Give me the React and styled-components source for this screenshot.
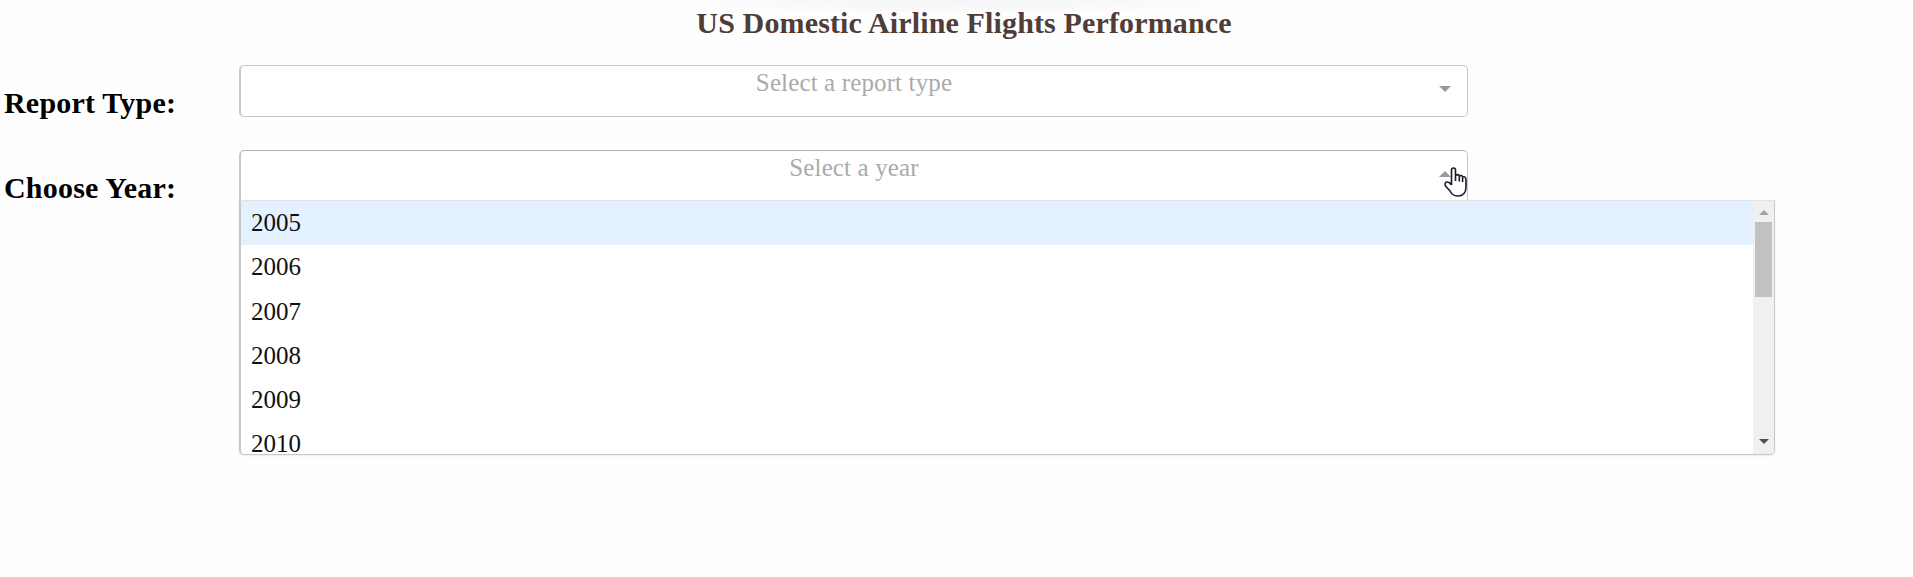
import React from "react";
import styled, { createGlobalStyle } from "styled-components";

const GlobalStyle = createGlobalStyle`
  body { margin: 0; background: #fefefe; font-family: "Liberation Serif", "Times New Roman", serif; overflow: hidden; }
  * { box-sizing: border-box; }
`;
const Page = styled.main`
  height: 577px;
  position: relative;
`;
const TopShade = styled.div`
  position: absolute;
  top: 0;
  left: 660px;
  width: 600px;
  height: 15px;
  background: radial-gradient(ellipse 50% 100% at 50% 0, #f5f5f5 0%, #f8f8f8 50%, #fefefe 100%);
`;
const Title = styled.h1`
  position: relative;
  margin: 0;
  padding: 6px 0 25px 15px;
  text-align: center;
  font-size: 30px;
  line-height: 34px;
  letter-spacing: 0.14px;
  color: #503d36;
`;
const Form = styled.div`
  display: grid;
  row-gap: 33px;
`;
const Row = styled.div`
  display: grid;
  grid-template-columns: 235px 1229px;
  padding-left: 4px;
  height: 52px;
`;
const Label = styled.h2`
  margin: 0;
  padding-top: 21px;
  font-size: 30px;
  line-height: 34px;
  letter-spacing: 0.2px;
  color: #000;
`;
const Field = styled.div`
  position: relative;
`;
const Control = styled.div`
  display: flex;
  justify-content: center;
  position: relative;
  height: ${(p) => (p.$open ? 50 : 52)}px;
  padding-top: 3px;
  background: #fff;
  border: 1px solid #c8c8c8;
  border-top-color: ${(p) => (p.$open ? "#b3b3b3" : "#c8c8c8")};
  border-left-width: 2px;
  border-bottom-width: ${(p) => (p.$open ? 0 : 1)}px;
  border-radius: ${(p) => (p.$open ? "5px 5px 0 0" : "5px")};
`;
const Placeholder = styled.span`
  font-size: 25px;
  line-height: 28px;
  letter-spacing: 0.13px;
  color: #aaa;
`;
const Caret = styled.svg`
  position: absolute;
  right: 16px;
  top: 20px;
  width: 12px;
  height: 6px;
  fill: #999;
`;
const Menu = styled.div`
  position: absolute;
  top: 50px;
  left: 0;
  width: 1536px;
  height: 255px;
  display: flex;
  overflow: hidden;
  background: #fff;
  border: 1px solid #c8c8c8;
  border-left-width: 2px;
  border-top-color: #e2e2e2;
  border-radius: 0 0 5px 5px;
  box-shadow: 0 1px 2px rgba(0, 0, 0, 0.08);
`;
const Options = styled.div`
  flex: 1;
`;
const Option = styled.div`
  height: 44.25px;
  padding: 8px 10px;
  font-size: 25px;
  line-height: 28px;
  color: #111;
  background: ${(p) => (p.$active ? "#e4f2ff" : "transparent")};
`;
const Scrollbar = styled.div`
  display: flex;
  flex-direction: column;
  align-items: center;
  width: 21px;
  padding: 9px 0 10px;
  background: #f0f0f0;
`;
const Arrow = styled.svg`
  width: 10px;
  height: 5px;
  fill: ${(p) => p.$color};
`;
const Thumb = styled.div`
  width: 17px;
  height: 75px;
  margin: 7px 0 auto;
  background: #c1c1c1;
`;
const Pointer = styled.svg`
  position: absolute;
  left: 1205px;
  top: 17px;
  width: 23px;
  height: 30px;
`;

const Down = () => <path d="M0 0H12L6 6Z" />;
const Up = () => <path d="M0 6H12L6 0Z" />;

export default function App() {
  return (
    <Page>
      <GlobalStyle />
      <TopShade />
      <Title>US Domestic Airline Flights Performance</Title>
      <Form>
        <Row>
          <Label>Report Type:</Label>
          <Field>
            <Control>
              <Placeholder>Select a report type</Placeholder>
              <Caret viewBox="0 0 12 6"><Down /></Caret>
            </Control>
          </Field>
        </Row>
        <Row>
          <Label>Choose Year:</Label>
          <Field>
            <Control $open>
              <Placeholder>Select a year</Placeholder>
              <Caret viewBox="0 0 12 6"><Up /></Caret>
            </Control>
            <Menu>
              <Options>
                {[2005, 2006, 2007, 2008, 2009, 2010].map((year, i) => (
                  <Option key={year} $active={i === 0}>{year}</Option>
                ))}
              </Options>
              <Scrollbar>
                <Arrow $color="#a3a3a3" viewBox="0 0 12 6" preserveAspectRatio="none"><Up /></Arrow>
                <Thumb />
                <Arrow $color="#505050" viewBox="0 0 12 6" preserveAspectRatio="none"><Down /></Arrow>
              </Scrollbar>
            </Menu>
            <Pointer viewBox="0 0 23 30">
              <path
                d="M7.5 18V3Q7.5 1 9.5 1T11.5 3V8.5Q14.5 6.5 15.3 9Q18 7.5 18.6 10Q22 9 22 13V20Q22 29 13.5 29Q8.5 29 6 24L1.5 19Q0 15 3.5 15Q5.5 15 7.5 18M11.5 8.5V14M15.3 9V14.5M18.6 10V15"
                fill="#fff"
                stroke="#1b1b2b"
                strokeWidth="1.6"
                strokeLinejoin="round"
              />
            </Pointer>
          </Field>
        </Row>
      </Form>
    </Page>
  );
}
